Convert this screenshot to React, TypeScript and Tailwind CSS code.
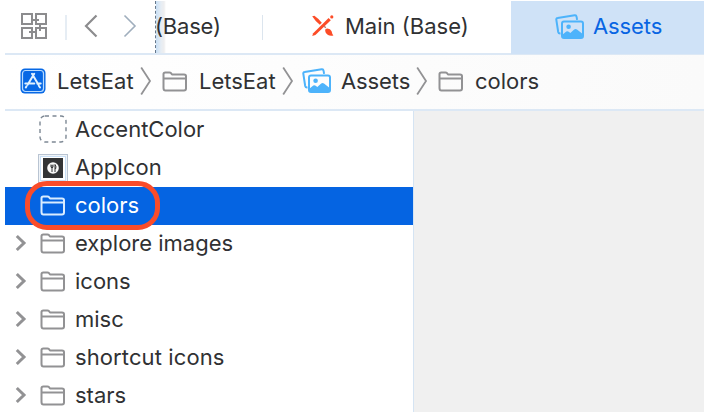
import type { ReactNode } from 'react';

function Folder({ color = '#929294' }: { color?: string }) {
  return (
    <svg width="26" height="22" viewBox="0 0 26 22" fill="none" stroke={color} strokeWidth="2" strokeLinejoin="round" className="block shrink-0">
      <path d="M1.5 17V3Q1.5 1.5 3.3 1.5H7.4Q8.4 1.5 9 2.2L10 3.5H22Q24 3.5 24 5.3V17.5Q24 19.5 22 19.5H3.5Q1.5 19.5 1.5 17Z" />
      <path d="M1.5 7.5H24" />
    </svg>
  );
}

function Photos() {
  return (
    <svg width="30" height="26" viewBox="0 0 30 26" fill="none" stroke="#4db3fb" strokeWidth="2" strokeLinejoin="round" className="relative -top-px block shrink-0">
      <path d="M5.5 19.5H5Q3.5 19.5 3.2 18L1.3 5.7Q1.1 4.2 2.6 4L19.7 1.3Q21.3 1.1 21.6 2.8L22.1 5.8" />
      <rect x="7" y="7.5" width="21" height="16.5" rx="2" />
      <circle cx="13.6" cy="12.7" r="2.3" fill="#4db3fb" stroke="none" />
      <path d="M7 21L11.3 17.6Q12.5 16.8 13.7 17.8L15.3 19L19.2 15.5Q20.6 14.4 22 15.5L28 20.3V24H7Z" fill="#4db3fb" stroke="none" />
    </svg>
  );
}

function Separator() {
  return (
    <svg width="12" height="28" viewBox="0 0 12 28" fill="none" stroke="#929294" strokeWidth="1.8" className="relative -left-px -top-px block shrink-0">
      <path d="M1.2 .6L10 14L1.2 27.4" />
    </svg>
  );
}

function Grid() {
  return (
    <svg width="28" height="28" viewBox="0 0 28 28" fill="none" stroke="#8c8c8e" strokeWidth="2" className="relative -top-px block shrink-0">
      <rect x="2" y="2" width="10" height="10" />
      <rect x="16" y="2" width="10" height="10" />
      <rect x="2" y="16" width="10" height="10" />
      <rect x="16" y="16" width="10" height="10" />
      <path d="M12 8H19M20 12V19M9 20H16" />
    </svg>
  );
}

function AppStore() {
  return (
    <svg width="26" height="26" viewBox="0 0 26 26" fill="none" className="relative -top-px block shrink-0">
      <rect x=".5" y=".5" width="25" height="25" rx="4.5" fill="#0768e5" />
      <rect x="2.5" y="2.5" width="21" height="21" rx="3" stroke="#b9dcff" strokeWidth="1.2" />
      <path d="M14.2 5.8L7.8 16.6M12 5.8L18.5 16.8M5.3 15.5H14.3M17.2 15.5H20.7M6.5 18.2L5.8 19.4M19 18L20 19.5" stroke="#e2f2ff" strokeWidth="2" strokeLinecap="round" />
    </svg>
  );
}

function Tools() {
  return (
    <svg width="24" height="24" viewBox="0 0 24 24" className="relative -top-px block shrink-0" fill="#fc4c27">
      <path d="M1.2 2.2L3.4 1.8Q8 5 10.8 8.8L8.8 10.8Q4.6 7.6 1.2 2.2Z" />
      <path d="M14.2 17Q14 14.6 16.4 14.6Q19.4 14.6 20.6 17.2Q21 19.8 22.4 21.4Q19.4 22.2 17 21Q14.4 19.8 14.2 17Z" />
      <path d="M1.2 22L2.2 19.2L17.6 4L19.8 6.2L4.4 21Z" />
      <path d="M13.2 12.2L14.8 13.8" stroke="#b87868" strokeWidth="1.3" />
      <circle cx="20.8" cy="2.9" r="1.6" />
    </svg>
  );
}

function AppThumb() {
  return (
    <div className="flex h-[29px] w-[30px] shrink-0 items-center justify-center border border-[#b9c4d2] bg-[#f0f4f8]">
      <div className="flex h-[25px] w-[26px] items-center justify-center border border-[#c9e0f7] bg-white">
        <svg width="20" height="20" viewBox="0 0 20 20" className="block">
          <rect width="20" height="20" fill="#333436" />
          <circle cx="10" cy="10" r="5.8" fill="#fafafa" />
          <path d="M8 6.5V9.2Q9 10.3 10 9.2V6.5M9 7V14M12 14V6.5Q13.4 8 12.8 10.5H12" fill="none" stroke="#333436" strokeWidth="1" />
        </svg>
      </div>
    </div>
  );
}

function Chevron() {
  return (
    <svg width="12" height="18" viewBox="0 0 12 18" fill="none" stroke="#929294" strokeWidth="3" className="relative -top-px block shrink-0">
      <path d="M1.8 2L9 9L1.8 16" />
    </svg>
  );
}

function Row({ icon, label, spacing = 'tracking-normal', expandable, selected }: { icon: ReactNode; label: string; spacing?: string; expandable?: boolean; selected?: boolean }) {
  return (
    <div className={`flex h-[38px] shrink-0 items-center ${selected ? 'relative bg-[#0564e2] text-white' : ''}`}>
      <div className="flex w-[33px] shrink-0 pl-[10px]">{expandable && <Chevron />}</div>
      <div className="flex w-[37px] shrink-0 items-center">{icon}</div>
      <span className={`whitespace-pre pb-[2px] ${spacing}`}>{label}</span>
      {selected && <div className="absolute -top-[6px] left-[20px] h-[49px] w-[135px] rounded-[22px] border-[5px] border-[#fa4c2a]" />}
    </div>
  );
}

export default function App() {
  return (
    <div className="flex h-[412px] w-[704px] flex-col overflow-hidden bg-white pl-[5px] pt-px font-['Inter','Liberation_Sans',sans-serif] text-[22px] leading-[30px] text-[#303133]">
      <div className="flex h-[54px] shrink-0 border-b-2 border-[#dce8f5]">
        <div className="flex w-[150px] shrink-0 items-center pl-[15px]">
          <Grid />
          <div className="ml-[17px] h-[25px] w-[2px] bg-[#e6edf4]" />
          <svg width="14" height="24" viewBox="0 0 14 24" fill="none" stroke="#8c8c8e" strokeWidth="2.2" className="relative -top-px ml-[17px] block">
            <path d="M12.5 1.5L2 12L12.5 22.5" />
          </svg>
          <svg width="14" height="24" viewBox="0 0 14 24" fill="none" stroke="#a0aebd" strokeWidth="1.6" className="relative -top-px ml-[25px] block">
            <path d="M1.5 1.5L12 12L1.5 22.5" />
          </svg>
        </div>
        <div className="flex w-[107px] shrink-0 items-center border-l border-dashed border-[#66788c] bg-[linear-gradient(to_right,#c8dff5_0px,#e6edf4_5px,#eeeeef_8px,#fff_10px)]">
          <span className="-ml-px whitespace-pre pb-[2px] tracking-[-0.2px]">(Base)</span>
        </div>
        <div className="flex w-[249px] shrink-0 items-center">
          <div className="h-[25px] w-px bg-[#dce5ee]" />
          <div className="ml-[48px]"><Tools /></div>
          <span className="ml-[10px] whitespace-pre pb-[2px]">Main (Base)</span>
        </div>
        <div className="flex h-[53px] grow items-center bg-[#cfe2f7] pl-[44px] text-[#0865e3]">
          <Photos />
          <span className="ml-[8px] pb-[3px] tracking-[-0.1px]">Assets</span>
        </div>
      </div>
      <div className="flex h-[56px] shrink-0 items-center border-b-2 border-[#dce8f5] bg-gradient-to-r from-white to-[#fafafa] pl-[15px]">
        <AppStore />
        <span className="ml-[11px] w-[84px] shrink-0 pb-[2px]">LetsEat</span>
        <Separator />
        <div className="ml-[9px]"><Folder /></div>
        <span className="ml-[11px] w-[84px] shrink-0 pb-[2px]">LetsEat</span>
        <Separator />
        <div className="ml-[7px]"><Photos /></div>
        <span className="ml-[9px] w-[76px] shrink-0 pb-[2px] tracking-[-0.1px]">Assets</span>
        <Separator />
        <div className="ml-[9px]"><Folder /></div>
        <span className="ml-[11px] pb-[2px]">colors</span>
      </div>
      <div className="flex min-h-0 grow">
        <div className="flex w-[409px] shrink-0 flex-col border-r border-[#d5e4f3]">
          <Row
            icon={
              <svg width="30" height="30" viewBox="0 0 30 30" fill="none" stroke="#7d8894" strokeWidth="1.4" className="relative -top-px block">
                <rect x="2" y="2" width="26" height="26" rx="5" strokeDasharray="4 3.5" />
              </svg>
            }
            label="AccentColor"
          />
          <Row icon={<AppThumb />} label="AppIcon" />
          <Row icon={<div className="pl-[2px]"><Folder color="#d9ecff" /></div>} label="colors" selected />
          <Row icon={<div className="pl-[2px]"><Folder /></div>} label="explore images" expandable />
          <Row icon={<div className="pl-[2px]"><Folder /></div>} label="icons" expandable />
          <Row icon={<div className="pl-[2px]"><Folder /></div>} label="misc" expandable />
          <Row icon={<div className="pl-[2px]"><Folder /></div>} label="shortcut icons" spacing="tracking-[0.1px]" expandable />
          <Row icon={<div className="pl-[2px]"><Folder /></div>} label="stars" expandable />
        </div>
        <div className="grow bg-[#f0f0f0]" />
      </div>
    </div>
  );
}
